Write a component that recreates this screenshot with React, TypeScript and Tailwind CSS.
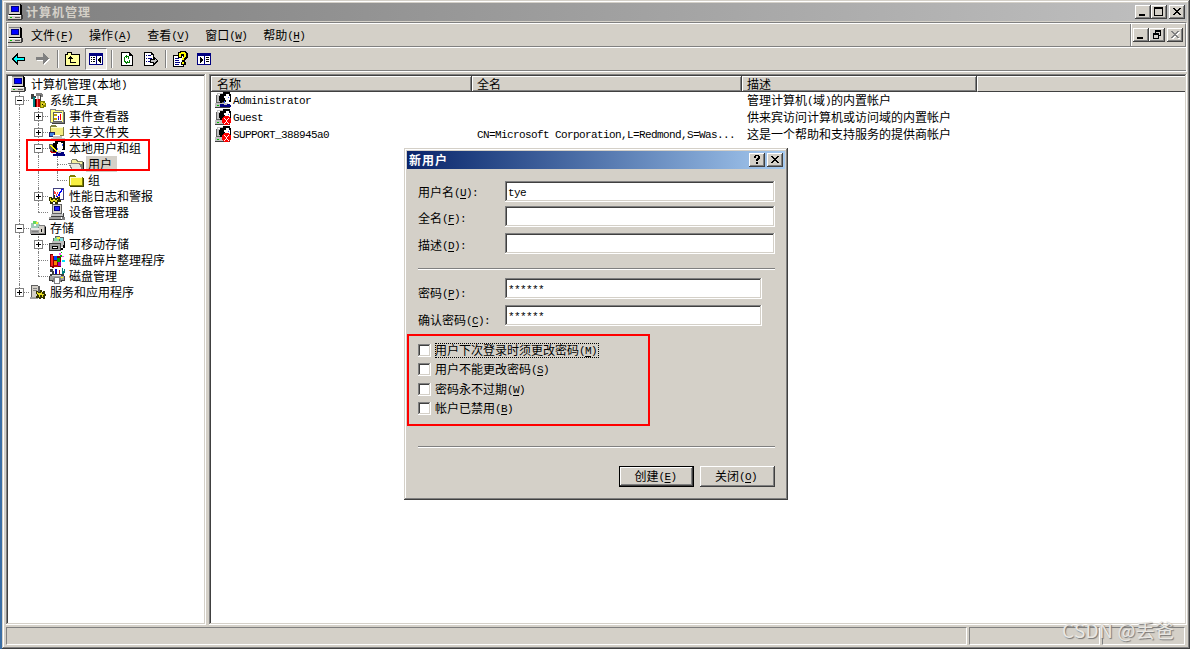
import type { ReactNode } from "react";

type Win = { className?: string; children?: ReactNode };

// Splits a label into CJK and half-width runs; "&X" marks a mnemonic.
function T({ children }: { children: string }) {
  const parts = children.split(/([\x20-\x7e]+)/);
  return (
    <span className="whitespace-pre">
      {parts.map((p, i) => {
        if (i % 2 === 0) return p;
        const [before, rest] = p.split("&");
        return (
          <span
            key={i}
            className="relative -top-px font-['Liberation_Mono',monospace] text-[11px] leading-[12px] tracking-[-0.6px]"
          >
            {before}
            {rest ? (
              <>
                <span className="underline underline-offset-2">{rest[0]}</span>
                {rest.slice(1)}
              </>
            ) : null}
          </span>
        );
      })}
    </span>
  );
}

function Svg({ children, w = 16, h = 16 }: { children: ReactNode; w?: number; h?: number }) {
  return (
    <svg
      width={w}
      height={h}
      viewBox={`0 0 ${w} ${h}`}
      shapeRendering="crispEdges"
      className="block shrink-0"
      aria-hidden
    >
      {children}
    </svg>
  );
}

function ComputerIcon() {
  return (
    <Svg>
      <path d="M1 0h12v1h1v10H1z" fill="#000" />
      <path d="M1 1h11v9H1z" fill="#d4d0c8" />
      <path d="M1 0h11v1H1z" fill="#808080" />
      <path d="M3 2h8v6H3z" fill="#000080" />
      <path d="M4 3h6v4H4z" fill="#0000ff" />
      <path d="M0 11h13v4H0z" fill="#d4d0c8" />
      <path d="M0 11h13v1H0z" fill="#fff" />
      <path d="M0 15h14v1H0zM13 11h2v4h-2z" fill="#404040" />
      <path d="M2 13h2v1H2z" fill="#00c000" />
      <path d="M7 13h5v1H7z" fill="#606060" />
    </Svg>
  );
}

function ToolsIcon() {
  return (
    <Svg>
      <path d="M1 2h3v2h2v2H4v1H1z" fill="#404040" />
      <path d="M3 5h2v10H3z" fill="#008080" />
      <path d="M5 7h1v8H5z" fill="#000" />
      <path d="M6 1h6v1h1v3h-2V4H6z" fill="#808080" />
      <path d="M7 4h2v4H7z" fill="#c0c0c0" />
      <path d="M6 7h4v8H6z" fill="#c00000" />
      <path d="M7 7h1v8H7z" fill="#ff6060" />
      <path d="M10 3h1v12h-1z" fill="#404040" />
      <path d="M10 9h5v2h1v4h-2v1h-4z" fill="#808000" />
      <path d="M11 10h2v1h2v2h-2v2h-2z" fill="#e0d020" />
      <path d="M12 12h1v1h-1z" fill="#000" />
    </Svg>
  );
}

function EventIcon() {
  return (
    <Svg>
      <path d="M1 1h5l1 1h8v13H1z" fill="#808080" />
      <path d="M2 2h4v1h8v11H2z" fill="#ffff80" />
      <path d="M4 4h9v10H4z" fill="#606060" />
      <path d="M5 5h8v8H5z" fill="#fff" />
      <path d="M5 6h3v2H5zM5 10h3v2H5z" fill="#c0a000" />
      <path d="M9 8h1v4H9z" fill="#0000ff" />
      <path d="M11 6h1v6h-1zM9 9h1v1H9z" fill="#ff0000" />
      <path d="M15 4h1v12H3v-1h12z" fill="#404040" />
    </Svg>
  );
}

function ShareIcon() {
  return (
    <Svg>
      <path d="M1 2h1V1h5v1h1v1h7v9H1z" fill="#808040" />
      <path d="M2 3h12v8H2z" fill="#f4ec80" />
      <path d="M2 3h12v1H2z" fill="#ffffd0" />
      <path d="M0 8h6v5H0z" fill="#202060" />
      <path d="M1 9h4v3H1z" fill="#4080e0" />
      <path d="M4 12h9v2h3v2H2v-2h2z" fill="#c0c0c0" />
      <path d="M4 11h7v1H4z" fill="#fff" />
      <path d="M2 15h13v1H2z" fill="#808080" />
    </Svg>
  );
}

function UserIcon({ disabled }: { disabled?: boolean }) {
  return (
    <Svg>
      <path d="M2 1h6v10H1V3h1z" fill="#c0c0c0" />
      <path d="M3 2h4v1H3z" fill="#fff" />
      <path d="M1 10h9v1H1zM1 3h1v8H1z" fill="#606060" />
      <path d="M0 11h13v4H0z" fill="#c0c0c0" />
      <path d="M0 15h15v1H0z" fill="#404040" />
      <path d="M2 13h2v1H2z" fill="#00c000" />
      <path d="M8 0h7v2h1v8H7v1H5V9H4V4h1V2h3z" fill="#000" />
      <path d="M11 2h3v2h1v4h-1v2h-3V8h-1V6H9V4h2z" fill="#fff" />
      <path d="M13 5h1v1h-1zM9 9h1v2H9z" fill="#4060ff" />
      {disabled ? (
        <>
          <path d="M9 7h5v1h1v1h1v5h-1v1h-1v1H9v-1H8v-1H7V9h1V8h1z" fill="#ff0000" />
          <path
            d="M9 9h1v1h1v1h1v-1h1V9h1v1h-1v1h-1v2h1v1h1v1h-1v-1h-1v-1h-1v1h-1v1H9v-1h1v-1h1v-2h-1v-1H9z"
            fill="#fff"
          />
        </>
      ) : (
        <path d="M5 12h4v1h3v-1h3v1h1v2H5z" fill="#000080" />
      )}
    </Svg>
  );
}

function GroupUsersIcon() {
  return (
    <Svg>
      <path d="M0 4h4v3h3v5H3v-1H1V9H0z" fill="#606060" />
      <path d="M6 0h8v1h2v9H7v2H4V3h2z" fill="#000" />
      <path d="M9 2h3v1h2v6h-1v2H9V8H8V4h1z" fill="#fff" />
      <path d="M13 4h1v2h-1zM8 8h1v2H8z" fill="#4060ff" />
      <path d="M0 5h2l6 6-1 1z" fill="#ffff00" />
      <path d="M1 11h2v1h4v1H2z" fill="#c00000" />
      <path d="M7 12h8v2h1v2H4v-2h3z" fill="#000080" />
      <path d="M9 11h3v2H9z" fill="#c0c0c0" />
    </Svg>
  );
}

function FolderIcon({ open }: { open?: boolean }) {
  return (
    <Svg>
      {open ? (
        <>
          <path d="M3 4h1V3h5v1h1v1h5v9H3z" fill="#808060" />
          <path d="M4 4h4v1h1v1h5v2H4z" fill="#f4f0a0" />
          <path d="M0 7h12v1h1v2h1v2h1v2H3v-2H2v-2H1V8H0z" fill="#808080" />
          <path d="M1 8h10v1h1v2h1v2H4v-2H3V9H1z" fill="#e8e8e0" />
          <path d="M15 6h1v9H3v-1h12z" fill="#202020" />
        </>
      ) : (
        <>
          <path d="M1 4h1V3h5v1h1v1h7v9H1z" fill="#808000" />
          <path d="M2 5h12v8H2z" fill="#f8f040" />
          <path d="M2 5h12v1H2zM2 5h1v8H2z" fill="#ffffd8" />
          <path d="M15 6h1v9H2v-1h13z" fill="#404000" />
        </>
      )}
    </Svg>
  );
}

function PerfIcon() {
  return (
    <Svg>
      <path d="M4 0h11v12H4z" fill="#404080" />
      <path d="M5 1h9v10H5z" fill="#fff" />
      <path d="M5 3h1v1h1v2h1V4h1v2h1v2h1v1h-1V8H9V6H8v2H7V6H5z" fill="#ff4040" />
      <path d="M7 8h2V6h1V4h1V3h1V1h2v1h-1v2h-1v1h-1v3H9v1H7z" fill="#0000ff" />
      <path d="M0 9h3v1h2V7h1v3h2V9h3v3h1v2H9v2H6v-2H4v2H1v-3H0z" fill="#303000" />
      <path d="M1 10h1v2h2v-1h2v1h2v-1h1v1H8v2H6v-1H4v1H2v-1H1z" fill="#e8e020" />
    </Svg>
  );
}

function DeviceIcon() {
  return (
    <Svg>
      <path d="M3 0h10v10H3z" fill="#606060" />
      <path d="M4 1h8v8H4z" fill="#d4d0c8" />
      <path d="M5 2h6v5H5z" fill="#000080" />
      <path d="M6 3h4v3H6z" fill="#2020ff" />
      <path d="M2 10h12v3H2z" fill="#c0c0c0" />
      <path d="M2 12h13v1H2zM14 9h1v3h-1z" fill="#404040" />
      <path d="M0 13h12v2H0z" fill="#a0a0a0" />
      <path d="M0 15h13v1H0z" fill="#404040" />
      <path d="M13 13h3v3h-3z" fill="#808080" />
    </Svg>
  );
}

function StorageIcon() {
  return (
    <Svg>
      <path d="M3 1h4v1h2v2h1v5H1V3h2z" fill="#a0c8b8" />
      <path d="M3 1h3v3H3z" fill="#60d860" />
      <path d="M6 2h2v2H6z" fill="#f0f040" />
      <path d="M4 4h2v2H4z" fill="#fff" />
      <path d="M9 5h6v1h1v9H8V7h1z" fill="#808080" />
      <path d="M9 6h5v7H9z" fill="#d4d0c8" />
      <path d="M11 9h1v3h-1z" fill="#000" />
      <path d="M0 8h9v6H0z" fill="#a0a0a0" />
      <path d="M1 8h8v2H1z" fill="#e8e8e8" />
      <path d="M2 11h6v1H2z" fill="#808080" />
      <path d="M1 14h15v1H1zM15 7h1v8h-1z" fill="#000" />
    </Svg>
  );
}

function RemovableIcon() {
  return (
    <Svg>
      <path d="M6 0h5v1h4v4h1v6H4V2h2z" fill="#606060" />
      <path d="M5 2h2V1h3v4H5z" fill="#80d8a0" />
      <path d="M8 1h3v2H8z" fill="#f0f040" />
      <path d="M11 2h3v4h-3z" fill="#80e0e0" />
      <path d="M3 5h12v6H3z" fill="#c0c0c0" />
      <path d="M0 7h12v8H0z" fill="#404040" />
      <path d="M1 8h10v6H1z" fill="#a0a0a0" />
      <path d="M3 10h6v3H3z" fill="#000" />
      <path d="M4 11h4v1H4z" fill="#fff" />
      <path d="M12 12h2V9h1V5h1v7h-2v2h-2z" fill="#000" />
    </Svg>
  );
}

function DefragIcon() {
  return (
    <Svg>
      <path d="M1 2h3v2h8v11H5v1H3v-1H1z" fill="#800000" />
      <path d="M2 3h2v11H2z" fill="#ff2020" />
      <path d="M5 4h3v4H5z" fill="#0040ff" />
      <path d="M8 6h3v4H8z" fill="#00a000" />
      <path d="M5 9h3v4H5z" fill="#ff8000" />
      <path d="M9 10h3v4H9z" fill="#a000c0" />
      <path d="M5 13h4v2H5z" fill="#c00000" />
      <path d="M10 1h2v2h-2zM13 4h2v1h-2z" fill="#ff40ff" />
      <path d="M11 3h2v2h-2zM12 0h1v1h-1z" fill="#00c000" />
      <path d="M13 8h3v2h-3z" fill="#00e0ff" />
    </Svg>
  );
}

function DiskIcon() {
  return (
    <Svg>
      <path d="M1 1h3v2h1v3H3V4H1z" fill="#404040" />
      <path d="M6 1h2v6H6z" fill="#0000c0" />
      <path d="M10 2h1v5h-1z" fill="#c00000" />
      <path d="M13 0h1v3h1V1h1v4h-1v3h-2z" fill="#008080" />
      <path d="M1 6h14v2h1v5h-3v1H3v-1H0V8h1z" fill="#404040" />
      <path d="M1 8h14v4H1z" fill="#a0a0a0" />
      <path d="M3 7h9v1H3z" fill="#e0e0e0" />
      <path d="M5 9h6v1h1v4h-1v2H5v-2H4v-4h1z" fill="#808080" />
      <path d="M6 10h4v5H6z" fill="#fff" />
      <path d="M12 9h2v1h-2z" fill="#ffff00" />
    </Svg>
  );
}

function ServicesIcon() {
  return (
    <Svg>
      <path d="M1 1h7v1h2v12H1z" fill="#606060" />
      <path d="M2 2h6v11H2z" fill="#d4d0c8" />
      <path d="M3 4h4v1H3zM3 6h4v1H3z" fill="#808080" />
      <path d="M0 13h8v2H0z" fill="#a0a0a0" />
      <path d="M6 7h2v1h2V6h2v2h1V7h2v3h1v2h-1v3h-2v-1h-2v1H9v-1H6v-2h1v-2H6z" fill="#303000" />
      <path d="M7 8h1v1h3V8h1v2h2v1h-1v2h-1v-2h-2v2H9v-2H8v-1H7z" fill="#e8e020" />
    </Svg>
  );
}

const raised =
  "bg-[#d4d0c8] shadow-[inset_-1px_-1px_0_#404040,inset_1px_1px_0_#fff,inset_-2px_-2px_0_#808080]";
const frame =
  "bg-[#d4d0c8] shadow-[inset_-1px_-1px_0_#404040,inset_1px_1px_0_#d4d0c8,inset_-2px_-2px_0_#808080,inset_2px_2px_0_#fff]";
const sunken =
  "bg-white shadow-[inset_-1px_-1px_0_#fff,inset_1px_1px_0_#808080,inset_-2px_-2px_0_#d4d0c8,inset_2px_2px_0_#404040]";

type Glyph = "min" | "max" | "restore" | "close" | "help";

const glyphs: Record<Glyph, string> = {
  min: "M4 9h6v2H4z",
  max: "M3 2h9v9H3zM4 4v6h7V4z",
  restore: "M6 2h6v6h-2v3H4V5h2zM7 4v1h3v2h1V4zM5 7v3h4V7z",
  close: "M4 3h2v1h1v1h2V4h1V3h2v1h-1v1h-1v1H9v1h1v1h1v1h1v1h-2V9H9V8H7v1H6v1H4V9h1V8h1V7h1V6H6V5H5V4H4z",
  help: "M6 2h4v1h1v3h-1v1H9v1H7V6h1V5h1V3H7v2H5V3h1zM7 9h2v2H7z",
};

function CaptionButton({ glyph, muted }: { glyph: Glyph; muted?: boolean }) {
  return (
    <button type="button" aria-label={glyph} className={`h-[14px] w-4 shrink-0 ${raised}`}>
      <Svg h={14}>
        {muted ? <path d={glyphs[glyph]} fill="#fff" transform="translate(1 1)" /> : null}
        <path d={glyphs[glyph]} fill={muted ? "#808080" : "#000"} fillRule="evenodd" />
      </Svg>
    </button>
  );
}

function Separator() {
  return <div className="h-[18px] w-[2px] border-l border-r border-l-[#808080] border-r-white" />;
}

function Toolbar() {
  return (
    <div className="flex h-6 items-center border-t border-b border-t-white border-b-[#808080] pl-[5px]">
      <Svg w={14} h={12}>
        <path d="M0 5h1V4h1V3h1V2h1V1h1V0h1v4h7v4H6v4H5v-1H4v-1H3V9H2V8H1V7H0z" fill="#000" />
        <path d="M2 5h1V4h1V3h1v2h7v2H5v2H4V8H3V7H2z" fill="#00ffff" />
      </Svg>
      <div className="ml-[10px]">
        <Svg w={14} h={12}>
          <path d="M1 5h7V1h1v1h1v1h1v1h1v1h1v1h1v1h-1v1h-1v1h-1v1h-1v1H9v1H8V8H1z" fill="#fff" />
          <path d="M0 4h7V0h1v1h1v1h1v1h1v1h1v1h1v1h-1v1h-1v1h-1v1H9v1H8v1H7V7H0z" fill="#808080" />
        </Svg>
      </div>
      <div className="ml-[7px]"><Separator /></div>
      <div className="ml-[6px]">
        <Svg w={16} h={14}>
          <path d="M0 2h2V0h5v2h8v12H0z" fill="#000" />
          <path d="M1 3h2V1h3v2h8v10H1z" fill="#ffff9c" />
          <path d="M5 4h1v1h1v1h1v1H6v3h5v1H5V7H3V6h1V5h1z" fill="#000" />
        </Svg>
      </div>
      <div className="ml-[4px] grid h-[22px] w-[22px] place-items-center border border-[#808080] border-r-white border-b-white bg-[#ece9e4]">
        <Svg w={14} h={12}>
          <path d="M0 0h14v12H0z" fill="#000080" />
          <path d="M1 3h6v8H1zM8 3h5v8H8z" fill="#fff" />
          <path d="M2 4h1v1H2zM4 4h2v1H4zM2 6h1v1H2zM4 6h2v1H4zM2 8h1v1H2zM4 8h2v1H4zM11 4h1v6h-1V9h-1V8H9V6h1V5h1z" fill="#000" />
        </Svg>
      </div>
      <div className="ml-[4px]"><Separator /></div>
      <div className="ml-[8px]">
        <Svg w={12} h={14}>
          <path d="M0 0h9v1h1v1h1v1h1v11H0z" fill="#000" />
          <path d="M1 1h7v3h3v9H1z" fill="#fff" />
          <path d="M5 3h1v1h2v3H7V5H6v1H5V5H4v2H3V5h1V4h1zM4 7v2h1v1h1V9h1v1h1V8h1v3H6v1H5v-1H4v-1H3V7z" fill="#008000" />
        </Svg>
      </div>
      <div className="ml-[11px]">
        <Svg w={14} h={14}>
          <path d="M0 0h8v1h1v1h1v12H0z" fill="#000" />
          <path d="M1 1h6v2h2v10H1z" fill="#fff" />
          <path d="M2 3h1v1H2zM4 3h3v1H4zM2 6h1v1H2zM4 6h4v1H4zM2 9h1v1H2zM4 9h2v1H4z" fill="#000080" />
          <path d="M6 7h4V5h1v1h1v1h1v1h1v2h-1v1h-1v1h-1v1h-1v-2H6z" fill="#000" />
          <path d="M7 8h4V7h1v1h1v1h-1v1h-1v1h-1v-1H7z" fill="#c0c0c0" />
        </Svg>
      </div>
      <div className="ml-[7px]"><Separator /></div>
      <div className="ml-[6px]">
        <Svg w={15} h={16}>
          <path d="M0 4h11v12H0z" fill="#000" />
          <path d="M1 5h9v10H1z" fill="#fff" />
          <path d="M2 7h4v1H2zM2 9h4v1H2zM2 11h5v1H2zM2 13h4v1H2z" fill="#000080" />
          <path d="M5 1h2V0h6v1h1v1h1v5h-1v1h-1v1h-1v2h1v3H8v-3h1V7h2V5H9v2H5z" fill="#000" />
          <path d="M6 2h2V1h4v1h1v4h-1v1h-1v2H9V7h1V6h1V3H8v3H6zM9 11h2v2H9z" fill="#ffff00" />
        </Svg>
      </div>
      <div className="ml-[9px]">
        <Svg w={14} h={12}>
          <path d="M0 0h14v12H0z" fill="#000080" />
          <path d="M1 3h6v8H1zM8 3h5v8H8z" fill="#fff" />
          <path d="M9 4h3v1H9zM9 6h3v1H9zM9 8h3v1H9zM3 4h1v1h1v1h1v2H5v1H4v1H3z" fill="#000" />
        </Svg>
      </div>
    </div>
  );
}

const menus = ["文件(&F)", "操作(&A)", "查看(&V)", "窗口(&W)", "帮助(&H)"];

// guides: one letter per indent cell. "|" line, "t" branch, "l" last branch,
// "+"/"-" expander, "e" expander on the last branch.
type Node = { guides: string; icon: ReactNode; label: string; selected?: boolean };

const tree: Node[] = [
  { guides: "", icon: <ComputerIcon />, label: "计算机管理(本地)" },
  { guides: "-", icon: <ToolsIcon />, label: "系统工具" },
  { guides: "|+", icon: <EventIcon />, label: "事件查看器" },
  { guides: "|+", icon: <ShareIcon />, label: "共享文件夹" },
  { guides: "|-", icon: <GroupUsersIcon />, label: "本地用户和组" },
  { guides: "||t", icon: <FolderIcon open />, label: "用户", selected: true },
  { guides: "||l", icon: <FolderIcon />, label: "组" },
  { guides: "|+", icon: <PerfIcon />, label: "性能日志和警报" },
  { guides: "|l", icon: <DeviceIcon />, label: "设备管理器" },
  { guides: "-", icon: <StorageIcon />, label: "存储" },
  { guides: "|+", icon: <RemovableIcon />, label: "可移动存储" },
  { guides: "|t", icon: <DefragIcon />, label: "磁盘碎片整理程序" },
  { guides: "|l", icon: <DiskIcon />, label: "磁盘管理" },
  { guides: "e", icon: <ServicesIcon />, label: "服务和应用程序" },
];

function Guide({ kind }: { kind: string }) {
  const half = kind === "l" || kind === "e";
  const box = kind === "+" || kind === "-" || kind === "e";
  return (
    <span className="relative h-4 w-[19px] shrink-0">
      <span
        className={`absolute top-0 left-2 border-l border-dotted border-[#808080] ${half ? "h-2" : "h-4"}`}
      />
      {kind !== "|" ? (
        <span className="absolute top-2 left-2 w-[10px] border-t border-dotted border-[#808080]" />
      ) : null}
      {box ? (
        <span className="absolute top-1 left-1 h-[9px] w-[9px] border border-[#808080] bg-white">
          <span className="absolute top-[3px] left-[1px] h-px w-[5px] bg-black" />
          {kind !== "-" ? <span className="absolute top-[1px] left-[3px] h-[5px] w-px bg-black" /> : null}
        </span>
      ) : null}
    </span>
  );
}

function Tree() {
  return (
    <div className={`relative w-[200px] shrink-0 p-[2px] ${sunken}`}>
      {tree.map((n) => (
        <div key={n.label} className="flex h-4 items-center pl-[3px]">
          {n.guides.split("").map((g, i) => (
            <Guide key={i} kind={g} />
          ))}
          {n.icon}
          <span
            className={`ml-[2px] flex h-4 items-center pl-[2px] ${n.selected ? "bg-[#d4d0c8] pr-[5px]" : ""}`}
          >
            <T>{n.label}</T>
          </span>
        </div>
      ))}
      <div className="absolute top-[65px] left-5 h-8 w-[124px] border-2 border-[#ff0000]" />
    </div>
  );
}

const users = [
  { name: "Administrator", full: "", desc: "管理计算机(域)的内置帐户" },
  { name: "Guest", full: "", desc: "供来宾访问计算机或访问域的内置帐户", disabled: true },
  {
    name: "SUPPORT_388945a0",
    full: "CN=Microsoft Corporation,L=Redmond,S=Was...",
    desc: "这是一个帮助和支持服务的提供商帐户",
    disabled: true,
  },
];

function HeaderCell({ className = "", children }: Win) {
  return (
    <div
      className={`flex h-4 items-center bg-[#d4d0c8] shadow-[inset_-1px_-1px_0_#404040,inset_1px_1px_0_#fff,inset_-2px_-2px_0_#808080] ${className}`}
    >
      {children}
    </div>
  );
}

function UserList() {
  return (
    <div className={`min-w-0 flex-1 p-[2px] ${sunken}`}>
      <div className="grid grid-cols-[261px_270px_235px_1fr]">
        <HeaderCell className="pl-[6px]"><T>名称</T></HeaderCell>
        <HeaderCell className="pl-[5px]"><T>全名</T></HeaderCell>
        <HeaderCell className="pl-[5px]"><T>描述</T></HeaderCell>
        <div className="h-4 border-t border-b border-l border-t-white border-b-[#404040] border-l-white bg-[#d4d0c8]" />
      </div>
      {users.map((u) => (
        <div key={u.name} className="grid h-[17px] grid-cols-[261px_270px_1fr] items-start leading-[15px]">
          <div className="flex items-start gap-[2px] pl-1">
            <UserIcon disabled={u.disabled} />
            <T>{u.name}</T>
          </div>
          <div className="pl-[5px]"><T>{u.full}</T></div>
          <div className="pl-[5px]"><T>{u.desc}</T></div>
        </div>
      ))}
    </div>
  );
}

type FieldProps = { label: string; value?: string; className: string; labelClass?: string; width: string };

function Field({ label, value, className, labelClass = "", width }: FieldProps) {
  return (
    <div className={`flex h-[21px] items-center ${className}`}>
      <span className={`w-[87px] shrink-0 ${labelClass}`}>
        <T>{label}</T>
      </span>
      <span className={`flex h-[21px] items-center pl-[3px] ${width} ${sunken}`}>
        {value ? <T>{value}</T> : null}
      </span>
    </div>
  );
}

const options = [
  { label: "用户下次登录时须更改密码(&M)", gap: "", focus: true },
  { label: "用户不能更改密码(&S)", gap: "mt-[6px]" },
  { label: "密码永不过期(&W)", gap: "mt-[7px]" },
  { label: "帐户已禁用(&B)", gap: "mt-[6px]" },
];

function Rule({ className }: Win) {
  return <div className={`h-[2px] border-t border-b border-t-[#808080] border-b-white ${className}`} />;
}

function NewUserDialog() {
  return (
    <div
      role="dialog"
      className={`absolute top-[148px] left-[404px] h-[352px] w-[384px] p-[3px] ${frame}`}
    >
      <div className="flex h-[18px] items-center bg-linear-to-r from-[#0a246a] to-[#a6caf0] pr-[2px] pl-[2px] font-bold text-white">
        <span className="flex-1 tracking-[1px]">新用户</span>
        <CaptionButton glyph="help" />
        <div className="w-[2px]" />
        <CaptionButton glyph="close" />
      </div>
      <div className="relative pt-3 pr-[10px] pl-[11px]">
        <Field label="用户名(&U):" value="tye" className="" width="w-[270px]" />
        <Field label="全名(&F):" className="mt-1" labelClass="pt-[3px]" width="w-[270px]" />
        <Field label="描述(&D):" className="mt-[6px]" labelClass="pt-[3px]" width="w-[270px]" />
        <Rule className="mt-[14px]" />
        <Field label="密码(&P):" value="******" className="mt-2" labelClass="pt-[9px]" width="w-[257px]" />
        <Field label="确认密码(&C):" value="******" className="mt-[6px]" labelClass="pt-[9px]" width="w-[257px]" />
        <div className="mt-[18px]">
          {options.map((o) => (
            <label key={o.label} className={`flex h-[13px] items-center ${o.gap}`}>
              <span className={`h-[13px] w-[13px] shrink-0 ${sunken}`} />
              <span
                className={`ml-1 flex h-[15px] items-center pb-px ${o.focus ? "w-[164px] outline-1 -outline-offset-1 outline-black outline-dotted" : ""}`}
              >
                <T>{o.label}</T>
              </span>
            </label>
          ))}
        </div>
        <Rule className="mt-[31px]" />
        <div className="mt-[18px] flex justify-end gap-[6px]">
          <button type="button" className="h-[21px] w-[75px] border border-black bg-[#d4d0c8] pr-[2px] pb-px shadow-[inset_-1px_-1px_0_#404040,inset_1px_1px_0_#fff,inset_-2px_-2px_0_#808080]">
            <T>创建(&E)</T>
          </button>
          <button type="button" className={`h-[21px] w-[75px] pr-[3px] pb-px ${raised}`}>
            <T>关闭(&O)</T>
          </button>
        </div>
        <div className="absolute top-[165px] left-0 h-[92px] w-[243px] border-2 border-[#ff0000]" />
      </div>
    </div>
  );
}

function StatusCell({ className }: Win) {
  return (
    <div
      className={`border border-t-[#808080] border-r-white border-b-white border-l-[#808080] ${className}`}
    />
  );
}

export default function App() {
  return (
    <div className="relative flex h-[649px] w-[1190px] overflow-hidden bg-[#3a6ea5] pl-[2px] font-['Noto_Sans_CJK_SC',sans-serif] text-[12px] leading-[16px] text-black select-none">
      <div className={`flex min-w-0 flex-1 flex-col pt-[3px] pr-[3px] pb-1 pl-1 ${frame}`}>
        <div className="flex h-[18px] shrink-0 items-center bg-linear-to-r from-[#808080] to-[#c0c0c0] pr-[2px] pl-[2px]">
          <ComputerIcon />
          <span className="ml-[2px] flex-1 font-bold tracking-[1px] text-[#d4d0c8]">计算机管理</span>
          <CaptionButton glyph="min" />
          <CaptionButton glyph="max" />
          <div className="w-[2px]" />
          <CaptionButton glyph="close" />
        </div>

        <div className="mt-px shrink-0 border border-b-0 border-t-[#808080] border-r-white border-l-[#808080]">
          <div className="flex h-6 items-stretch border-t border-r border-b border-l border-t-white border-r-[#808080] border-b-[#808080] border-l-white">
            <div className="flex flex-1 items-center">
              <ComputerIcon />
              <div className="ml-[7px] flex gap-4">
                {menus.map((m) => (
                  <T key={m}>{m}</T>
                ))}
              </div>
            </div>
            <div className="flex w-[55px] items-center border-l border-[#808080] pl-px shadow-[inset_1px_0_0_#fff]">
              <div className="w-px" />
              <CaptionButton glyph="min" />
              <CaptionButton glyph="restore" />
              <div className="w-[2px]" />
              <CaptionButton glyph="close" muted />
            </div>
          </div>
          <Toolbar />
        </div>
        <div className="mb-[2px] h-px shrink-0 bg-white" />

        <div className="flex h-[551px] shrink-0">
          <Tree />
          <div className="w-[3px] shrink-0" />
          <UserList />
        </div>

        <div className="mt-[2px] flex h-[18px] shrink-0 gap-[2px] pr-[2px]">
          <StatusCell className="w-[961px]" />
          <StatusCell className="w-[131px]" />
          <StatusCell className="flex-1" />
        </div>
      </div>

      <NewUserDialog />

      <div className="absolute top-[618px] left-[1062px] text-[19px] leading-[24px] tracking-[0.3px] whitespace-nowrap text-[#e9e7e3] [text-shadow:1px_1px_1px_#777]">
        CSDN @丢爸
      </div>
    </div>
  );
}
